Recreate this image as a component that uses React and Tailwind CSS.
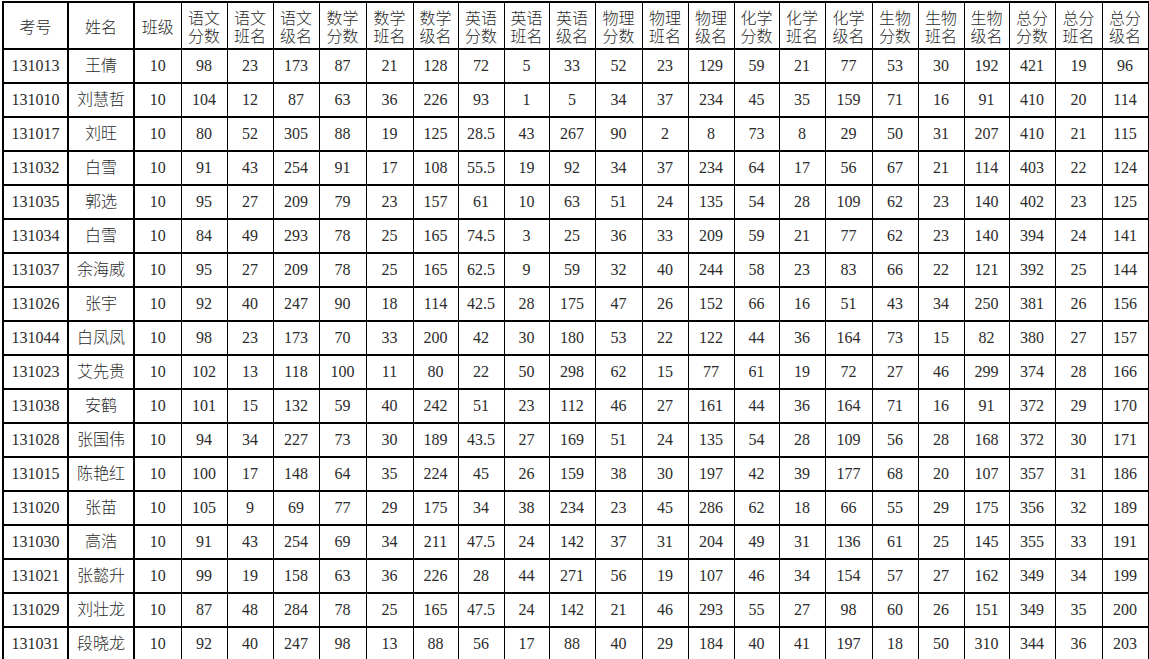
const subjects = ["语文", "数学", "英语", "物理", "化学", "生物", "总分"];
const kinds = ["分数", "班名", "级名"];

const rows = [
  "131013 王倩 10 98 23 173 87 21 128 72 5 33 52 23 129 59 21 77 53 30 192 421 19 96",
  "131010 刘慧哲 10 104 12 87 63 36 226 93 1 5 34 37 234 45 35 159 71 16 91 410 20 114",
  "131017 刘旺 10 80 52 305 88 19 125 28.5 43 267 90 2 8 73 8 29 50 31 207 410 21 115",
  "131032 白雪 10 91 43 254 91 17 108 55.5 19 92 34 37 234 64 17 56 67 21 114 403 22 124",
  "131035 郭选 10 95 27 209 79 23 157 61 10 63 51 24 135 54 28 109 62 23 140 402 23 125",
  "131034 白雪 10 84 49 293 78 25 165 74.5 3 25 36 33 209 59 21 77 62 23 140 394 24 141",
  "131037 余海威 10 95 27 209 78 25 165 62.5 9 59 32 40 244 58 23 83 66 22 121 392 25 144",
  "131026 张宇 10 92 40 247 90 18 114 42.5 28 175 47 26 152 66 16 51 43 34 250 381 26 156",
  "131044 白凤凤 10 98 23 173 70 33 200 42 30 180 53 22 122 44 36 164 73 15 82 380 27 157",
  "131023 艾先贵 10 102 13 118 100 11 80 22 50 298 62 15 77 61 19 72 27 46 299 374 28 166",
  "131038 安鹤 10 101 15 132 59 40 242 51 23 112 46 27 161 44 36 164 71 16 91 372 29 170",
  "131028 张国伟 10 94 34 227 73 30 189 43.5 27 169 51 24 135 54 28 109 56 28 168 372 30 171",
  "131015 陈艳红 10 100 17 148 64 35 224 45 26 159 38 30 197 42 39 177 68 20 107 357 31 186",
  "131020 张苗 10 105 9 69 77 29 175 34 38 234 23 45 286 62 18 66 55 29 175 356 32 189",
  "131030 高浩 10 91 43 254 69 34 211 47.5 24 142 37 31 204 49 31 136 61 25 145 355 33 191",
  "131021 张懿升 10 99 19 158 63 36 226 28 44 271 56 19 107 46 34 154 57 27 162 349 34 199",
  "131029 刘壮龙 10 87 48 284 78 25 165 47.5 24 142 21 46 293 55 27 98 60 26 151 349 35 200",
  "131031 段晓龙 10 92 40 247 98 13 88 56 17 88 40 29 184 40 41 197 18 50 310 344 36 203",
].map((r) => r.split(" "));

const widths = [65, 66, 47, 46, 46, 46, 47, 47, 45, 46, 45, 46, 47, 46, 46, 45, 46, 47, 46, 46, 45, 46, 47, 46];

const cell = "border-x border-y-2 border-black text-center p-0 font-light";

export default function App() {
  return (
    <div
      className="w-[1149px] h-[659px] overflow-hidden bg-white pl-[2px] pt-[1px] text-[#2b2b2b]"
      style={{ fontFamily: '"Liberation Serif", "Noto Sans CJK SC", serif' }}
    >
      <table className="table-fixed border-collapse border-l-2 border-black text-[16px]">
        <colgroup>
          {widths.map((w, i) => (
            <col key={i} style={{ width: w }} />
          ))}
        </colgroup>
        <thead>
          <tr className="h-[47px]">
            <th className={`${cell} border-r-2 pt-[4px]`}>考号</th>
            <th className={`${cell} border-r-2 pt-[4px]`}>姓名</th>
            <th className={`${cell} pt-[4px]`}>班级</th>
            {subjects.map((s) =>
              kinds.map((k) => (
                <th key={s + k} className={`${cell} leading-[18px] pt-[4px]`}>
                  {s}
                  <br />
                  {k}
                </th>
              ))
            )}
          </tr>
        </thead>
        <tbody>
          {rows.map((r, i) => (
            <tr key={i} className="h-[34px]">
              {r.map((v, j) => (
                <td key={j} className={`${cell} ${j < 2 ? "border-r-2" : ""}`}>
                  {v}
                </td>
              ))}
            </tr>
          ))}
        </tbody>
      </table>
    </div>
  );
}
